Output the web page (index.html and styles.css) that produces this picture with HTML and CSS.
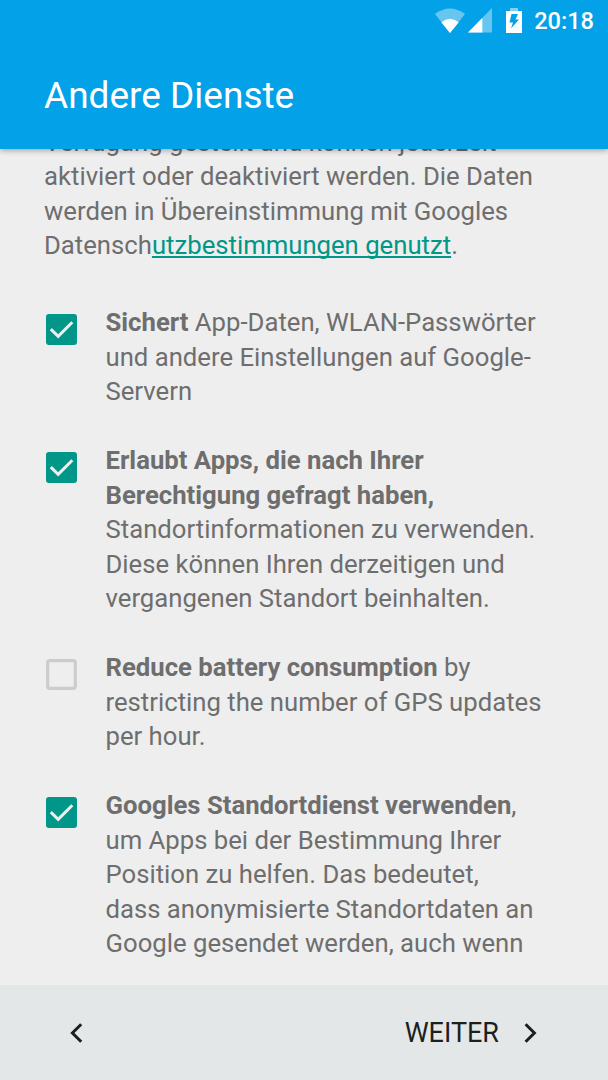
FILE: index.html
```html
<!DOCTYPE html>
<html lang="de">
<head>
<meta charset="utf-8">
<title>Andere Dienste</title>
<link rel="stylesheet" href="styles.css">
</head>
<body>
<div class="screen">
  <header class="header">
    <div class="status">
      <svg class="wifi" width="30" height="26" viewBox="0 0 30 26"><path d="M0 6Q15-5 30 6L15 25Z" fill="#fff" fill-opacity=".4"/><path d="M6.3 14.2Q15 7.2 23.7 14.2L15 25Z" fill="#fff"/></svg>
      <svg class="signal" width="24" height="25" viewBox="0 0 24 25"><path d="M24 0V24.5H0Z" fill="#fff" fill-opacity=".4"/><path d="M14.3 10V24.5H0Z" fill="#fff"/></svg>
      <svg class="battery" width="16" height="25" viewBox="0 0 16 25"><path d="M4 0h8v3H4z" fill="#fff" fill-opacity=".5"/><path d="M0 3h16v22H0z" fill="#fff"/><path d="M5.5 6H12L9.5 11.5H13L5 20.5 7 14.5H3.5Z" fill="#03a1e7"/></svg>
      <span class="clock">20:18</span>
    </div>
    <h1 class="title">Andere Dienste</h1>
  </header>
  <main class="content">
    <p class="intro">Verfügung gestellt und können jederzeit<br>aktiviert oder deaktiviert werden. Die Daten<br>werden in Übereinstimmung mit Googles<br>Datensch<a class="link">utzbestimmungen genutzt</a>.</p>
    <div class="option">
      <svg class="box" width="31" height="31" viewBox="0 0 31 31"><rect width="31" height="31" rx="3" fill="#009688"/><path d="M4.8 15.1L12.2 22.3 26.3 8.2" fill="none" stroke="#eee" stroke-width="3"/></svg>
      <p class="text"><b>Sichert</b> App-Daten, WLAN-Passwörter<br>und andere Einstellungen auf Google-<br>Servern</p>
    </div>
    <div class="option">
      <svg class="box" width="31" height="31" viewBox="0 0 31 31"><rect width="31" height="31" rx="3" fill="#009688"/><path d="M4.8 15.1L12.2 22.3 26.3 8.2" fill="none" stroke="#eee" stroke-width="3"/></svg>
      <p class="text"><b>Erlaubt Apps, die nach Ihrer<br>Berechtigung gefragt haben,</b><br>Standortinformationen zu verwenden.<br>Diese können Ihren derzeitigen und<br>vergangenen Standort beinhalten.</p>
    </div>
    <div class="option">
      <svg class="box" width="31" height="31" viewBox="0 0 31 31"><rect x="1.7" y="1.7" width="27.6" height="27.6" rx="2" fill="none" stroke="#ccc" stroke-width="3.2"/></svg>
      <p class="text"><b>Reduce battery consumption</b> by<br>restricting the number of GPS updates<br>per hour.</p>
    </div>
    <div class="option">
      <svg class="box" width="31" height="31" viewBox="0 0 31 31"><rect width="31" height="31" rx="3" fill="#009688"/><path d="M4.8 15.1L12.2 22.3 26.3 8.2" fill="none" stroke="#eee" stroke-width="3"/></svg>
      <p class="text"><b>Googles Standortdienst verwenden</b>,<br>um Apps bei der Bestimmung Ihrer<br>Position zu helfen. Das bedeutet,<br>dass anonymisierte Standortdaten an<br>Google gesendet werden, auch wenn</p>
    </div>
  </main>
  <footer class="footer">
    <svg width="14" height="20" viewBox="0 0 14 20"><path d="M11.2 1.2L2.4 10 11.2 18.8" fill="none" stroke="#1d1f1f" stroke-width="3"/></svg>
    <div class="next">
      <span class="next-label">WEITER</span>
      <svg width="14" height="20" viewBox="0 0 14 20"><path d="M1.6 1.2L10.4 10 1.6 18.8" fill="none" stroke="#1d1f1f" stroke-width="3"/></svg>
    </div>
  </footer>
</div>
</body>
</html>
```
FILE: styles.css
```css
* { box-sizing: border-box; }
body { margin: 0; font-family: Roboto, sans-serif; }
.screen {
  display: flex;
  flex-direction: column;
  width: 608px;
  height: 1080px;
  overflow: hidden;
  background: #eee;
}
.header {
  position: relative;
  z-index: 1;
  flex: none;
  height: 148.5px;
  background: #03a1e7;
  color: #fff;
  box-shadow: 0 2px 5px rgba(0, 0, 0, .28);
}
.status {
  display: flex;
  justify-content: flex-end;
  align-items: flex-start;
  height: 42px;
  padding: 8px 14px 0 0;
}
.signal { margin-left: 3px; }
.battery { margin-left: 14px; }
.clock {
  margin: -1px 0 0 12px;
  font-size: 23.6px;
  font-weight: 500;
  line-height: 28px;
}
.title {
  margin: 32px 0 0 44px;
  font-size: 37px;
  font-weight: 400;
  line-height: 44px;
}
.content {
  flex: 1;
  min-height: 0;
  overflow: hidden;
  color: #6e6e6e;
  font-size: 25.7px;
  line-height: 34.5px;
  white-space: nowrap;
}
.intro { margin: -24px 0 42.5px 44px; }
.link {
  color: #009688;
  text-decoration: underline;
  text-decoration-thickness: 2px;
  text-underline-offset: 2px;
  text-decoration-skip-ink: none;
}
.option {
  display: flex;
  gap: 29px;
  margin: 0 0 34.5px 45.5px;
}
.box { flex: none; margin-top: 9px; }
.text { margin: 0; }
.footer {
  display: flex;
  flex: none;
  align-items: center;
  justify-content: space-between;
  height: 95px;
  padding: 0 70px;
  background: #e3e7e8;
  color: #1d1f1f;
}
.next {
  display: flex;
  align-items: center;
  gap: 25px;
}
.next-label { font-size: 27px; line-height: 34px; }
```
